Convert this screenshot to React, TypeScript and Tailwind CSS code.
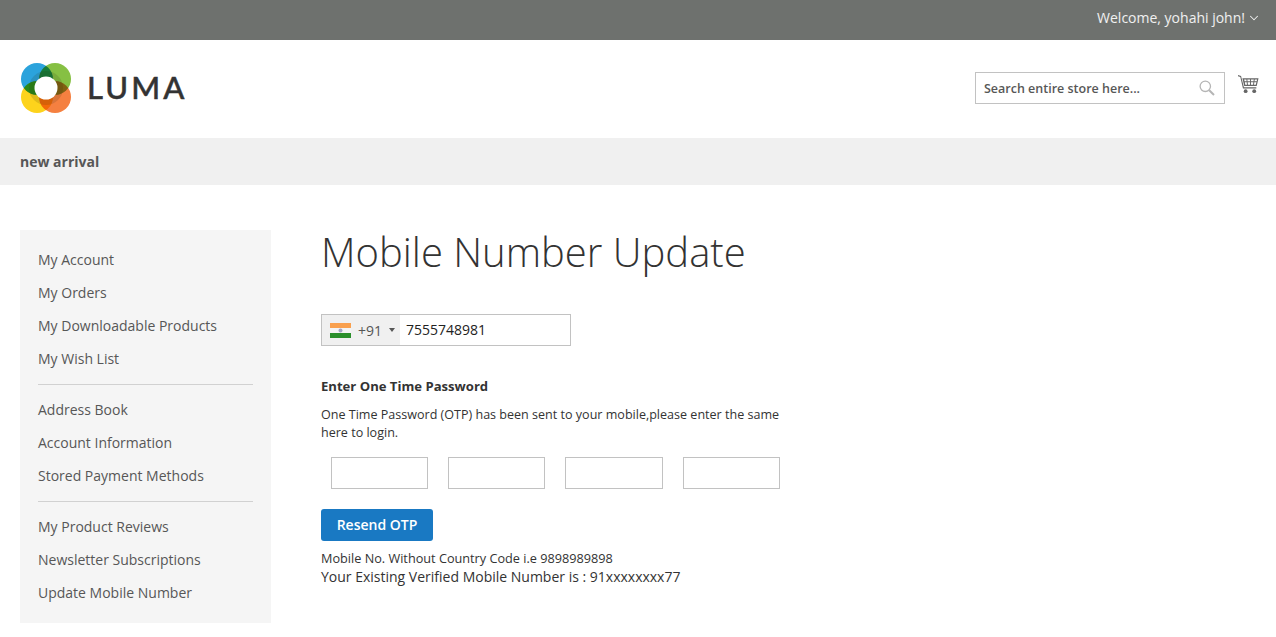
import { ChevronDown } from 'lucide-react'

const font = "[font-family:'Open_Sans','Noto_Sans',sans-serif]"

function Logo() {
  return (
    <svg width="50" height="50" viewBox="0 0 50 50" className="isolate">
      <circle cx="16" cy="16" r="16" fill="#2ba3dc" />
      <circle cx="34" cy="16" r="16" fill="#86c043" style={{ mixBlendMode: 'multiply' }} />
      <circle cx="16" cy="34" r="16" fill="#fdd31c" style={{ mixBlendMode: 'multiply' }} />
      <circle cx="34" cy="34" r="16" fill="#f58040" style={{ mixBlendMode: 'multiply' }} />
      <circle cx="25" cy="25" r="14" fill="none" stroke="#2a2a10" strokeOpacity="0.14" strokeWidth="6" />
      <circle cx="25" cy="25" r="11.5" fill="#fff" />
    </svg>
  )
}

function Cart() {
  return (
    <svg width="21" height="20" viewBox="0 0 22 20" fill="#666">
      <path d="M0 0.5 L3.2 1.6 L6.2 13.4 H19.2 V14.6 H5.2 L2.4 2.6 L0 1.8 Z" />
      <path d="M4.6 4 H21.5 L19.6 12.2 H6.5 Z M6.4 5.2 L6.9 7.2 H9 L8.8 5.2 Z M9.8 5.2 L10 7.2 H12.6 V5.2 Z M13.6 5.2 V7.2 H16.2 L16.6 5.2 Z M17.6 5.2 L17.2 7.2 H19.6 L20 5.2 Z M7.2 8.2 L7.6 10.8 H9.4 L9.1 8.2 Z M10.1 8.2 L10.4 10.8 H12.6 V8.2 Z M13.6 8.2 V10.8 H15.8 L16.1 8.2 Z M17.1 8.2 L16.8 10.8 H18.6 L19.3 8.2 Z" fillRule="evenodd" />
      <circle cx="8" cy="17.5" r="2" />
      <circle cx="17" cy="17.5" r="2" />
    </svg>
  )
}

function SearchGlyph() {
  return (
    <svg width="16" height="16" viewBox="0 0 16 16" fill="none" stroke="#b5b5b5" strokeWidth="1.3">
      <circle cx="6.3" cy="6.3" r="5.2" />
      <path d="M10.2 10.2 L15 15" strokeWidth="2" />
    </svg>
  )
}

function Flag() {
  return (
    <svg width="21" height="15" viewBox="0 0 21 15">
      <rect width="21" height="5" fill="#f9a04e" />
      <rect y="5" width="21" height="5" fill="#f4f4f4" />
      <rect y="10" width="21" height="5" fill="#2b8f2b" />
      <circle cx="10.5" cy="7.5" r="2" fill="#a3a3c4" />
    </svg>
  )
}

const groups = [
  ['My Account', 'My Orders', 'My Downloadable Products', 'My Wish List'],
  ['Address Book', 'Account Information', 'Stored Payment Methods'],
  ['My Product Reviews', 'Newsletter Subscriptions', 'Update Mobile Number'],
]

export default function App() {
  return (
    <div className={`${font} text-[#333]`}>
      <div className="flex h-10 items-center justify-end gap-[2px] bg-[#6e716e] pb-1 pr-[15px] text-sm text-white/90">
        <span>Welcome, yohahi john!</span>
        <ChevronDown size={14} strokeWidth={1.75} />
      </div>

      <header className="flex h-[98px] items-center justify-between pb-0.5 pl-[21px] pr-[17px]">
        <div className="flex items-center gap-4">
          <Logo />
          <span className="mb-0.5 text-[31px] font-medium leading-none tracking-[0.1em] text-[#333] [-webkit-text-stroke:0.5px_#333] [font-family:Lato,sans-serif]">LUMA</span>
        </div>
        <div className="flex items-center gap-[13px]">
          <div className="flex h-8 w-[250px] items-center justify-between border border-[#c2c2c2] pl-2 pr-[9px]">
            <span className="pt-0.5 text-[12.5px] font-semibold text-[#575757]">Search entire store here...</span>
            <SearchGlyph />
          </div>
          <div className="mb-2">
            <Cart />
          </div>
        </div>
      </header>

      <nav className="flex h-[47px] items-center bg-[#f0f0f0] pl-5 text-sm font-bold text-[#575757]">new arrival</nav>

      <div className="flex gap-[50px] pl-5 pt-[45px]">
        <aside className="h-[393px] w-[251px] bg-[#f5f5f5] pl-[18px] pr-[18px] pt-[13px] text-sm text-[#575757]">
          {groups.map((g, i) => (
            <div key={i} className={i > 0 ? 'mt-[9px] border-t border-[#d1d1d1] pt-2' : ''}>
              {g.map((item) => (
                <div key={item} className="flex h-[33px] items-center">{item}</div>
              ))}
            </div>
          ))}
        </aside>

        <main className="w-[460px]">
          <h1 className="text-[40px] font-light leading-[44px] text-[#333]">Mobile Number Update</h1>

          <div className="mt-[40px] flex h-8 w-[250px] items-stretch border border-[#c2c2c2]">
            <div className="flex w-[78px] items-center bg-[#f0f0f0] pl-2 text-sm text-[#555]">
              <Flag />
              <span className="ml-[7px] pt-0.5">+91</span>
              <span className="ml-[7px] h-0 w-0 border-x-[3px] border-t-[4px] border-x-transparent border-t-[#555]" />
            </div>
            <span className="flex items-center pl-[6px] text-sm text-[#222]">7555748981</span>
          </div>

          <h2 className="mt-[30px] text-[13.1px] font-bold leading-5 text-[#333]">Enter One Time Password</h2>
          <p className="mt-[10px] text-[12.56px] leading-[18px] text-[#333]">
            One Time Password (OTP) has been sent to your mobile,please enter the same here to login.
          </p>

          <div className="mt-[15px] flex gap-5 pl-[10px]">
            <input className="h-8 w-[97px] border border-[#c2c2c2] bg-white" />
            <input className="h-8 w-[97px] border border-[#c2c2c2] bg-white" />
            <input className="h-8 w-[98px] border border-[#c2c2c2] bg-white" />
            <input className="h-8 w-[97px] border border-[#c2c2c2] bg-white" />
          </div>

          <button className="mt-5 h-8 w-28 rounded-[3px] bg-[#1979c3] text-sm font-semibold text-white">Resend OTP</button>

          <p className="mt-2 text-[12.7px] leading-[18px]">Mobile No. Without Country Code i.e 9898989898</p>
          <p className="text-sm leading-5">Your Existing Verified Mobile Number is : 91xxxxxxxx77</p>
        </main>
      </div>
    </div>
  )
}
